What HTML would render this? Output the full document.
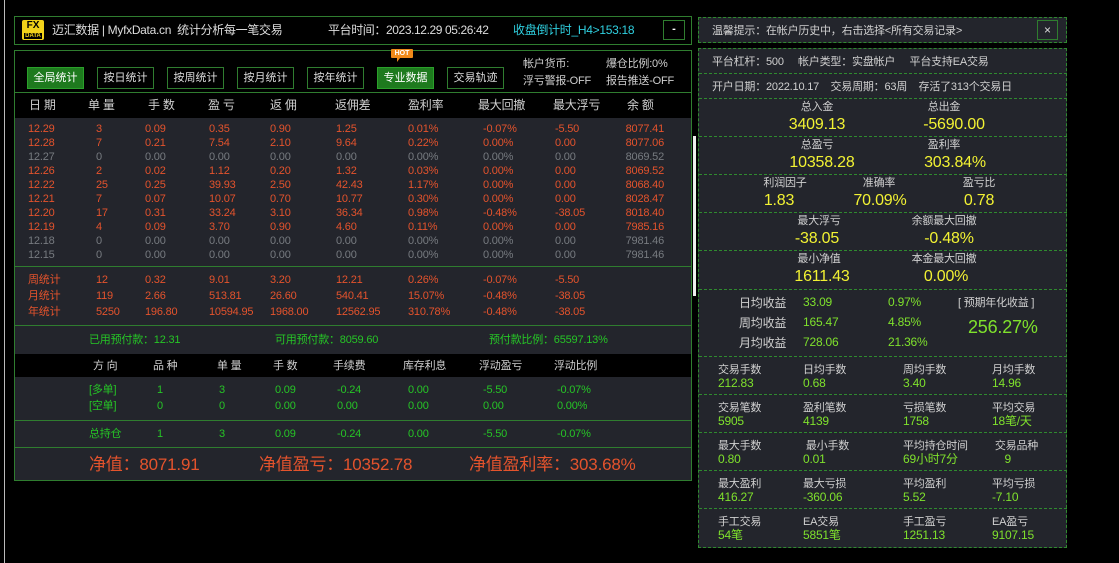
<!DOCTYPE html>
<html><head><meta charset="utf-8"><style>
*{margin:0;padding:0;box-sizing:border-box}
body{width:1119px;height:563px;background:#000;position:relative;overflow:hidden;font-family:"Liberation Sans","Noto Sans CJK SC",sans-serif;font-size:11px;color:#ccc}
.a{position:absolute;white-space:nowrap;line-height:14px;z-index:5;letter-spacing:-0.2px}
.r{color:#e4532c}.g{color:#777b80}.gr{color:#26c526}.y{color:#f2f233;font-size:16px;line-height:18px}.l{color:#7fe12c;font-size:12px}.w{color:#d0d0d0}
.box{position:absolute;border:1px solid #2f7d2f}
.btn{position:absolute;top:67px;height:22px;width:57px;border:1px solid #2f7d2f;color:#ddd;font-size:11px;text-align:center;line-height:20px}
.btn.on{background:#1e7a1e;border-color:#2aa02a;color:#fff}
.hl{position:absolute;height:1px;background:#2f7d2f}
.dl{position:absolute;left:699px;width:368px;border-top:1px dashed #2f8a2f;z-index:2}
.c{text-align:center;width:120px}
</style></head><body>
<div style="position:absolute;left:4px;top:0;width:1px;height:563px;background:#bbb"></div>
<div style="position:absolute;left:693px;top:136px;width:3px;height:160px;background:#eee"></div>
<!-- title -->
<div class="box" style="left:14px;top:16px;width:678px;height:29px"></div>
<div style="position:absolute;left:22px;top:20px;width:22px;height:20px;background:#f2d21a;border-radius:2px;color:#000;font-weight:bold;text-align:center;font-size:10px;line-height:9px;padding-top:1px">FX<br><span style="font-size:6px;background:#000;color:#f2d21a;padding:0 1px">DATA</span></div>
<div class="a" style="left:52px;top:23px;font-size:12px;color:#ddd;letter-spacing:-0.3px">迈汇数据 | MyfxData.cn&nbsp; 统计分析每一笔交易</div>
<div class="a" style="left:328px;top:23px;font-size:12px;color:#ddd;letter-spacing:-0.4px">平台时间：2023.12.29 05:26:42</div>
<div class="a" style="left:513px;top:23px;font-size:12px;color:#2fd0e0;letter-spacing:-0.3px">收盘倒计时_H4&gt;153:18</div>
<div class="box" style="left:663px;top:20px;width:22px;height:20px;color:#fff;text-align:center;line-height:16px;font-weight:bold">-</div>
<!-- main panel -->
<div class="box" style="left:14px;top:50px;width:678px;height:431px"></div>
<div style="position:absolute;left:15px;top:118px;width:676px;height:362px;background:#23252c"></div>
<div style="position:absolute;left:15px;top:354px;width:676px;height:23px;background:#000"></div>
<div class="btn on" style="left:27px">全局统计</div>
<div class="btn" style="left:97px">按日统计</div>
<div class="btn" style="left:167px">按周统计</div>
<div class="btn" style="left:237px">按月统计</div>
<div class="btn" style="left:307px">按年统计</div>
<div class="btn on" style="left:377px">专业数据</div>
<div class="btn" style="left:447px">交易轨迹</div>
<div style="position:absolute;left:391px;top:49px;width:22px;height:9px;background:#f08a1a;color:#fff;font-size:7px;line-height:9px;text-align:center;font-weight:bold;border-radius:1px">HOT</div>
<div style="position:absolute;left:397px;top:58px;border-left:3px solid #f08a1a;border-bottom:4px solid transparent"></div>
<div class="a w" style="left:523px;top:57px">帐户货币:</div>
<div class="a w" style="left:606px;top:57px">爆仓比例:0%</div>
<div class="a w" style="left:523px;top:74px">浮亏警报-OFF</div>
<div class="a w" style="left:606px;top:74px">报告推送-OFF</div>
<div class="hl" style="left:15px;top:92px;width:676px"></div>
<div class="hl" style="left:15px;top:266px;width:676px"></div>
<div class="hl" style="left:15px;top:325px;width:676px"></div>
<div class="hl" style="left:15px;top:420px;width:676px"></div>
<div class="hl" style="left:15px;top:447px;width:676px"></div>
<!-- right panel -->
<div style="position:absolute;left:698px;top:17px;width:369px;height:26px;background:#23252c;border:1px dashed #2f8a2f"></div>
<div class="a w" style="left:712px;top:24px">温馨提示：在帐户历史中，右击选择&lt;所有交易记录&gt;</div>
<div class="box" style="left:1037px;top:20px;width:21px;height:20px;color:#ddd;text-align:center;line-height:18px;font-size:12px;z-index:3">×</div>
<div style="position:absolute;left:698px;top:48px;width:369px;height:500px;background:#23252c;border:1px dashed #2f8a2f"></div>
<div class="dl" style="top:73px"></div><div class="dl" style="top:98px"></div><div class="dl" style="top:136px"></div><div class="dl" style="top:174px"></div><div class="dl" style="top:212px"></div><div class="dl" style="top:250px"></div><div class="dl" style="top:289px"></div><div class="dl" style="top:356px"></div><div class="dl" style="top:394px"></div><div class="dl" style="top:432px"></div><div class="dl" style="top:470px"></div><div class="dl" style="top:508px"></div>
<div class="a w" style="left:712px;top:55px">平台杠杆：500&nbsp;&nbsp;&nbsp;&nbsp; 帐户类型：实盘帐户&nbsp;&nbsp;&nbsp;&nbsp; 平台支持EA交易</div>
<div class="a w" style="left:712px;top:80px">开户日期：2022.10.17&nbsp;&nbsp;&nbsp; 交易周期：63周&nbsp;&nbsp;&nbsp; 存活了313个交易日</div>
<div id="t"></div>
<script>
var h='';
function A(x,y,t,c,s){h+='<div class="a '+(c||'')+'" style="left:'+x+'px;top:'+y+'px;'+(s||'')+'">'+t+'</div>';}
var hx=[29,88,148,208,270,335,408,478,553,627];
['日 期','单 量','手 数','盈 亏','返 佣','返佣差','盈利率','最大回撤','最大浮亏','余 额'].forEach(function(t,i){A(hx[i],98,t,'w','font-size:12px');});
var dx=[28,96,145,209,270,336,408,483,555];
var rows=[
['r','12.29','3','0.09','0.35','0.90','1.25','0.01%','-0.07%','-5.50','8077.41'],
['r','12.28','7','0.21','7.54','2.10','9.64','0.22%','0.00%','0.00','8077.06'],
['g','12.27','0','0.00','0.00','0.00','0.00','0.00%','0.00%','0.00','8069.52'],
['r','12.26','2','0.02','1.12','0.20','1.32','0.03%','0.00%','0.00','8069.52'],
['r','12.22','25','0.25','39.93','2.50','42.43','1.17%','0.00%','0.00','8068.40'],
['r','12.21','7','0.07','10.07','0.70','10.77','0.30%','0.00%','0.00','8028.47'],
['r','12.20','17','0.31','33.24','3.10','36.34','0.98%','-0.48%','-38.05','8018.40'],
['r','12.19','4','0.09','3.70','0.90','4.60','0.11%','0.00%','0.00','7985.16'],
['g','12.18','0','0.00','0.00','0.00','0.00','0.00%','0.00%','0.00','7981.46'],
['g','12.15','0','0.00','0.00','0.00','0.00','0.00%','0.00%','0.00','7981.46']];
rows.forEach(function(r,j){var y=122+j*14;for(var i=0;i<9;i++)A(dx[i],y,r[i+1],r[0]);h+='<div class="a '+r[0]+'" style="right:455px;top:'+y+'px">'+r[10]+'</div>';});
[['周统计','12','0.32','9.01','3.20','12.21','0.26%','-0.07%','-5.50'],['月统计','119','2.66','513.81','26.60','540.41','15.07%','-0.48%','-38.05'],['年统计','5250','196.80','10594.95','1968.00','12562.95','310.78%','-0.48%','-38.05']].forEach(function(r,j){for(var i=0;i<9;i++)A(dx[i],273+j*16,r[i],'r');});
A(89,333,'已用预付款：12.31','gr');A(275,333,'可用预付款：8059.60','gr');A(489,333,'预付款比例：65597.13%','gr');
var px=[93,153,217,273,333,403,479,554];
['方 向','品 种','单 量','手 数','手续费','库存利息','浮动盈亏','浮动比例'].forEach(function(t,i){A(px[i],359,t,'w');});
var vx=[89,157,219,275,337,408,483,557];
[['[多单]','1','3','0.09','-0.24','0.00','-5.50','-0.07%',383],['[空单]','0','0','0.00','0.00','0.00','0.00','0.00%',399],['总持仓','1','3','0.09','-0.24','0.00','-5.50','-0.07%',427]].forEach(function(r){for(var i=0;i<8;i++)A(vx[i],r[8],r[i],'gr');});
A(89,455,'净值：8071.91','r','font-size:17px;line-height:20px');A(259,455,'净值盈亏：10352.78','r','font-size:17px;line-height:20px');A(469,455,'净值盈利率：303.68%','r','font-size:17px;line-height:20px');
function C(cx,y,t,c){A(cx-60,y,t,'c '+c);}
C(817,100,'总入金','w');C(944,100,'总出金','w');C(817,116,'3409.13','y');C(954,116,'-5690.00','y');
C(817,138,'总盈亏','w');C(944,138,'盈利率','w');C(822,154,'10358.28','y');C(955,154,'303.84%','y');
C(785,176,'利润因子','w');C(879,176,'准确率','w');C(979,176,'盈亏比','w');C(779,192,'1.83','y');C(880,192,'70.09%','y');C(979,192,'0.78','y');
C(819,214,'最大浮亏','w');C(944,214,'余额最大回撤','w');C(817,230,'-38.05','y');C(949,230,'-0.48%','y');
C(819,252,'最小净值','w');C(944,252,'本金最大回撤','w');C(822,268,'1611.43','y');C(946,268,'0.00%','y');
[['日均收益','33.09','0.97%',296],['周均收益','165.47','4.85%',316],['月均收益','728.06','21.36%',336]].forEach(function(r){A(739,r[3],r[0],'w','font-size:12px');A(803,r[3]-1,r[1],'l');A(888,r[3]-1,r[2],'l');});
A(958,296,'[ 预期年化收益 ]','w');A(968,317,'256.27%','l','font-size:18px;line-height:20px');
var qx=[718,803,903,992];
[[['交易手数','212.83'],['日均手数','0.68'],['周均手数','3.40'],['月均手数','14.96']],
[['交易笔数','5905'],['盈利笔数','4139'],['亏损笔数','1758'],['平均交易','18笔/天']],
[['最大手数','0.80'],['&nbsp;最小手数','0.01'],['平均持仓时间','69小时7分'],['&nbsp;交易品种','&nbsp;&nbsp;&nbsp;&nbsp;9']],
[['最大盈利','416.27'],['最大亏损','-360.06'],['平均盈利','5.52'],['平均亏损','-7.10']],
[['手工交易','54笔'],['EA交易','5851笔'],['手工盈亏','1251.13'],['EA盈亏','9107.15']]].forEach(function(s,k){var y=363+k*38;s.forEach(function(p,i){A(qx[i],y,p[0],'w');A(qx[i],y+13,p[1],'l');});});
document.getElementById('t').outerHTML=h;
</script>
</body></html>
